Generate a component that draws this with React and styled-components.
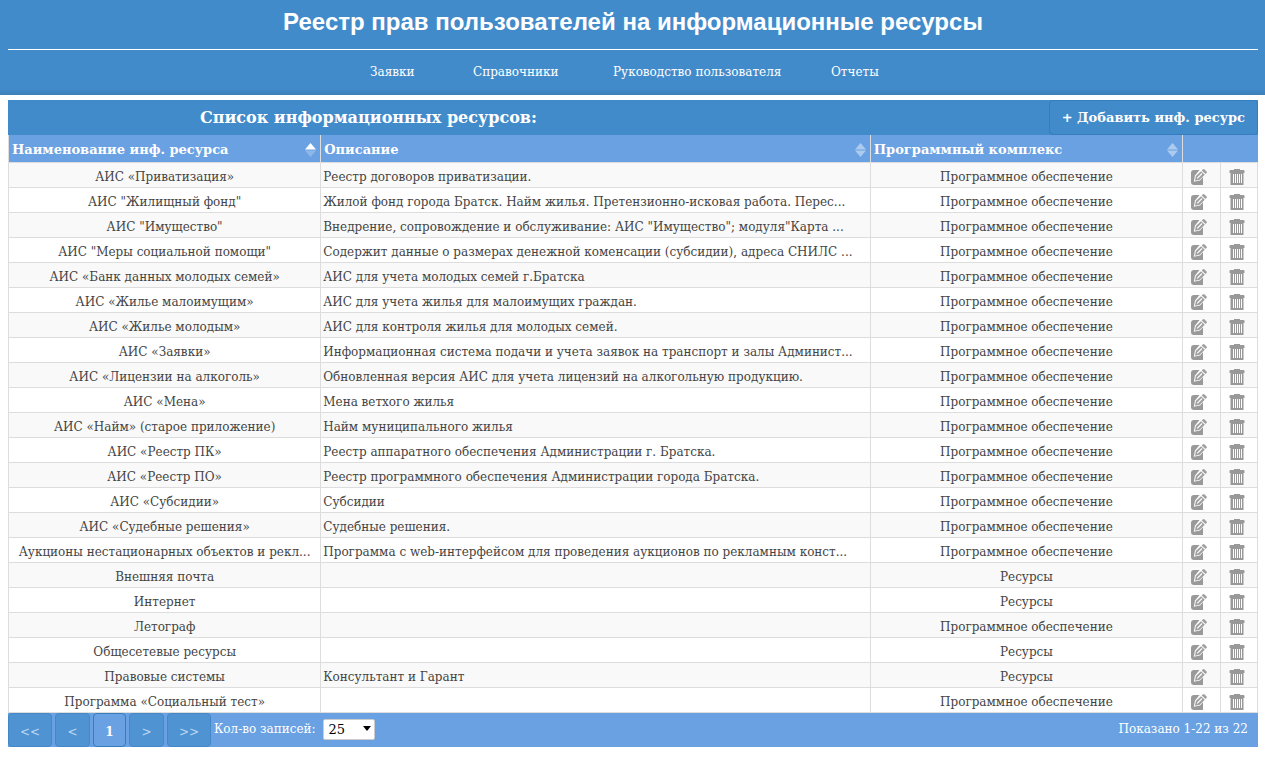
import React, { useState } from "react";
import styled, { createGlobalStyle, css } from "styled-components";

const serif = `"DejaVu Serif", Georgia, serif`;
const blue = "#428bca";
const lightBlue = "#6aa1e2";

const GlobalStyle = createGlobalStyle`
  *, *::before, *::after { box-sizing: border-box; }
  body {
    margin: 0;
    background: #fff;
    color: #444;
    font-family: ${serif};
    font-size: 12px;
    line-height: 20px;
  }
`;

const Header = styled.header`
  padding: 0 7px 0 8px;
  height: 95px;
  background: linear-gradient(${blue} 88px, #3c80ba 95px);
  color: #fff;
`;

const Title = styled.h1`
  margin: 0;
  height: 50px;
  padding-top: 8px;
  border-bottom: 1px solid #fff;
  font: bold 24px/28px "Liberation Sans", Arial, sans-serif;
  text-align: center;
`;

const Nav = styled.nav`
  display: grid;
  grid-template-columns: 103px 140px 218px 52px;
  justify-content: center;
  padding: 12px 13px 0 0;
`;

const NavLink = styled.a`
  color: #fff;
  text-decoration: none;
  white-space: nowrap;
`;

const Panel = styled.main`
  margin: 5px 7px 0 8px;
`;

const PanelBar = styled.div`
  display: flex;
  justify-content: space-between;
  align-items: stretch;
  height: 35px;
  background: ${blue};
  color: #fff;
`;

const PanelTitle = styled.h2`
  margin: 0;
  padding-left: 192px;
  font-size: 16px;
  line-height: 36px;
`;

const AddButton = styled.button`
  padding: 0 12px;
  border: 1px solid #357ebd;
  border-radius: 4px;
  background: ${blue};
  color: #fff;
  font: bold 13px/32px ${serif};
`;

const Table = styled.table`
  width: 100%;
  table-layout: fixed;
  border-collapse: collapse;
`;

const HeadCell = styled.th`
  height: 27px;
  padding: 3px 4px 0 3px;
  border: 1px solid #ddd;
  border-top: 0;
  background: ${lightBlue};
  color: #fff;
  font-size: 13px;
  text-align: left;
  &:last-child { border-right-color: ${lightBlue}; }
`;

const HeadInner = styled.div`
  display: flex;
  align-items: center;
  justify-content: space-between;
`;

const Row = styled.tr`
  background: #fff;
  &:nth-child(odd) { background: #f9f9f9; }
`;

const Cell = styled.td`
  height: 25px;
  padding: 4px 2px 0;
  border: 1px solid #ddd;
  text-align: ${(p) => p.$align || "center"};
  line-height: 20px;
  white-space: nowrap;
  overflow: hidden;
`;

const IconCell = styled.td`
  padding: 5px 4px 0 0;
  border: 1px solid #ddd;
`;

const IconButton = styled.button`
  display: block;
  width: 16px;
  height: 16px;
  margin: 0 auto;
  padding: 0;
  border: 0;
  background: none;
  svg { display: block; }
`;

const Footer = styled.footer`
  display: flex;
  height: 34px;
  background: ${lightBlue};
  color: #fff;
`;

const Pager = styled.div`
  display: flex;
  gap: 3px;
`;

const PageButton = styled.button`
  width: ${(p) => (p.$wide ? "44px" : "35px")};
  padding: 5px 0 0;
  border: 1px solid #4389c9;
  border-radius: 4px;
  background: #4f93d2;
  color: #b9d6f0;
  font: 12px/20px ${serif};
  ${(p) =>
    p.$current &&
    css`
      width: 33px;
      border-color: #357ebd;
      background: ${lightBlue};
      color: #fff;
      font-weight: bold;
    `}
`;

const SizeLabel = styled.label`
  display: flex;
  align-items: flex-start;
  gap: 7px;
  padding: 6px 0 0 3px;
`;

const SelectWrap = styled.span`
  position: relative;
  svg {
    position: absolute;
    right: 4px;
    top: 7px;
    pointer-events: none;
  }
`;

const Select = styled.select`
  display: block;
  appearance: none;
  width: 52px;
  height: 21px;
  padding: 0 0 0 5px;
  border: 1px solid #ccc;
  border-radius: 2px;
  background: #fff;
  color: #000;
  font: 13px/19px ${serif};
`;

const Summary = styled.span`
  margin-left: auto;
  padding: 6px 10px 0 0;
`;

function SortIcon({ active }) {
  return (
    <svg width="11" height="14" viewBox="0 0 11 14" aria-hidden="true">
      <path d="M0 6.5 5.5 0 11 6.5z" fill="#fff" opacity={active ? 1 : 0.45} />
      <path d="M0 7.5h11L5.5 14z" fill="#fff" opacity={active ? 0.25 : 0.45} />
    </svg>
  );
}

function EditIcon() {
  return (
    <svg width="16" height="16" viewBox="0 0 16 16" aria-hidden="true">
      <path d="M3 1h9v15H3q-3 0-3-3V4q0-3 3-3z" fill="#999" />
      <path
        d="M9.4 0 4 6.6 2.8 12.7 9 11.5 13.5 6.5V0z"
        fill="#fff"
      />
      <path d="m10 2.2 3.8 3.6-5.1 5-4.7 1 .9-4.7z" fill="#a0a0a0" />
      <path d="m10.7 1.5 1-1q.9-.8 1.8 0l1.9 1.7q.9.9.1 1.8l-1 1.1z" fill="#a0a0a0" />
      <path d="m6.2 9.4 4.8-4.9" stroke="#fff" strokeWidth="1.1" fill="none" />
    </svg>
  );
}

function TrashIcon() {
  return (
    <svg width="16" height="16" viewBox="0 0 16 16" aria-hidden="true">
      <path d="M5 0h6v1h3.5q1 0 1 1v2H.5V2q0-1 1-1H5z" fill="#999" />
      <path d="M1.5 4h13v12h-13z" fill="#999" />
      <path d="M4.5 5v9M6.5 5v9M8.5 5v9M10.5 5v9M12.5 5v9" stroke="#fff" strokeWidth="1" />
    </svg>
  );
}

const software = "Программное обеспечение";
const resources = "Ресурсы";

const rows = [
  ["АИС «Приватизация»", "Реестр договоров приватизации.", software],
  ['АИС "Жилищный фонд"', "Жилой фонд города Братск. Найм жилья. Претензионно-исковая работа. Перес...", software],
  ['АИС "Имущество"', 'Внедрение, сопровождение и обслуживание: АИС "Имущество"; модуля"Карта ...', software],
  ['АИС "Меры социальной помощи"', "Содержит данные о размерах денежной коменсации (субсидии), адреса СНИЛС ...", software],
  ["АИС «Банк данных молодых семей»", "АИС для учета молодых семей г.Братска", software],
  ["АИС «Жилье малоимущим»", "АИС для учета жилья для малоимущих граждан.", software],
  ["АИС «Жилье молодым»", "АИС для контроля жилья для молодых семей.", software],
  ["АИС «Заявки»", "Информационная система подачи и учета заявок на транспорт и залы Админист...", software],
  ["АИС «Лицензии на алкоголь»", "Обновленная версия АИС для учета лицензий на алкогольную продукцию.", software],
  ["АИС «Мена»", "Мена ветхого жилья", software],
  ["АИС «Найм» (старое приложение)", "Найм муниципального жилья", software],
  ["АИС «Реестр ПК»", "Реестр аппаратного обеспечения Администрации г. Братска.", software],
  ["АИС «Реестр ПО»", "Реестр программного обеспечения Администрации города Братска.", software],
  ["АИС «Субсидии»", "Субсидии", software],
  ["АИС «Судебные решения»", "Судебные решения.", software],
  ["Аукционы нестационарных объектов и рекл...", "Программа с web-интерфейсом для проведения аукционов по рекламным конст...", software],
  ["Внешняя почта", "", resources],
  ["Интернет", "", resources],
  ["Летограф", "", software],
  ["Общесетевые ресурсы", "", resources],
  ["Правовые системы", "Консультант и Гарант", resources],
  ["Программа «Социальный тест»", "", software],
];

const columns = ["Наименование инф. ресурса", "Описание", "Программный комплекс"];

export default function App() {
  const [pageSize, setPageSize] = useState("25");
  return (
    <>
      <GlobalStyle />
      <Header>
        <Title>Реестр прав пользователей на информационные ресурсы</Title>
        <Nav>
          <NavLink href="#requests">Заявки</NavLink>
          <NavLink href="#directories">Справочники</NavLink>
          <NavLink href="#guide">Руководство пользователя</NavLink>
          <NavLink href="#reports">Отчеты</NavLink>
        </Nav>
      </Header>
      <Panel>
        <PanelBar>
          <PanelTitle>Список информационных ресурсов:</PanelTitle>
          <AddButton type="button">+ Добавить инф. ресурс</AddButton>
        </PanelBar>
        <Table>
          <colgroup>
            <col style={{ width: "25%" }} />
            <col style={{ width: "44%" }} />
            <col style={{ width: "25%" }} />
            <col style={{ width: "3%" }} />
            <col style={{ width: "3%" }} />
          </colgroup>
          <thead>
            <tr>
              {columns.map((name, i) => (
                <HeadCell key={name} scope="col">
                  <HeadInner>
                    {name}
                    <SortIcon active={i === 0} />
                  </HeadInner>
                </HeadCell>
              ))}
              <HeadCell colSpan={2} />
            </tr>
          </thead>
          <tbody>
            {rows.map(([name, description, complex]) => (
              <Row key={name}>
                <Cell>{name}</Cell>
                <Cell $align="left">{description}</Cell>
                <Cell>{complex}</Cell>
                <IconCell>
                  <IconButton type="button" aria-label="Редактировать">
                    <EditIcon />
                  </IconButton>
                </IconCell>
                <IconCell>
                  <IconButton type="button" aria-label="Удалить">
                    <TrashIcon />
                  </IconButton>
                </IconCell>
              </Row>
            ))}
          </tbody>
        </Table>
        <Footer>
          <Pager>
            <PageButton type="button" $wide>&lt;&lt;</PageButton>
            <PageButton type="button">&lt;</PageButton>
            <PageButton type="button" $current>1</PageButton>
            <PageButton type="button">&gt;</PageButton>
            <PageButton type="button" $wide>&gt;&gt;</PageButton>
          </Pager>
          <SizeLabel>
            Кол-во записей:
            <SelectWrap>
              <Select value={pageSize} onChange={(e) => setPageSize(e.target.value)}>
                <option>10</option>
                <option>25</option>
                <option>50</option>
              </Select>
              <svg width="8" height="5" viewBox="0 0 8 5" aria-hidden="true">
                <path d="M0 0h8L4 5z" fill="#000" />
              </svg>
            </SelectWrap>
          </SizeLabel>
          <Summary>Показано 1-22 из 22</Summary>
        </Footer>
      </Panel>
    </>
  );
}
